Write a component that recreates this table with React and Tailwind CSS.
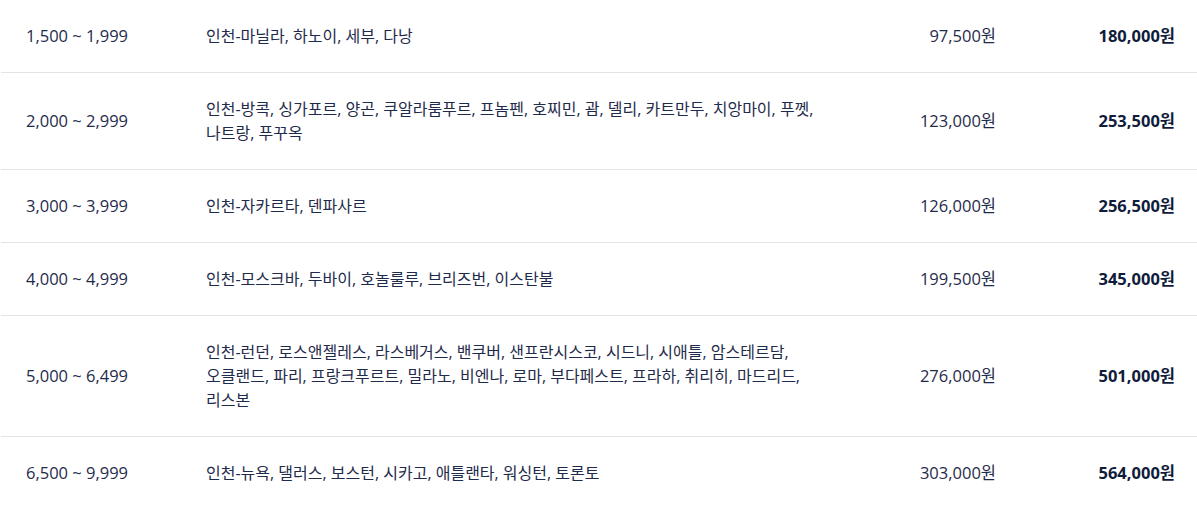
const rows = [
  {
    range: "1,500 ~ 1,999",
    cities: "인천-마닐라, 하노이, 세부, 다낭",
    base: "97,500원",
    total: "180,000원",
  },
  {
    range: "2,000 ~ 2,999",
    cities:
      "인천-방콕, 싱가포르, 양곤, 쿠알라룸푸르, 프놈펜, 호찌민, 괌, 델리, 카트만두, 치앙마이, 푸껫, 나트랑, 푸꾸옥",
    base: "123,000원",
    total: "253,500원",
  },
  {
    range: "3,000 ~ 3,999",
    cities: "인천-자카르타, 덴파사르",
    base: "126,000원",
    total: "256,500원",
  },
  {
    range: "4,000 ~ 4,999",
    cities: "인천-모스크바, 두바이, 호놀룰루, 브리즈번, 이스탄불",
    base: "199,500원",
    total: "345,000원",
  },
  {
    range: "5,000 ~ 6,499",
    cities:
      "인천-런던, 로스앤젤레스, 라스베거스, 밴쿠버, 샌프란시스코, 시드니, 시애틀, 암스테르담, 오클랜드, 파리, 프랑크푸르트, 밀라노, 비엔나, 로마, 부다페스트, 프라하, 취리히, 마드리드, 리스본",
    base: "276,000원",
    total: "501,000원",
  },
  {
    range: "6,500 ~ 9,999",
    cities: "인천-뉴욕, 댈러스, 보스턴, 시카고, 애틀랜타, 워싱턴, 토론토",
    base: "303,000원",
    total: "564,000원",
  },
];

export default function App() {
  return (
    <div
      className="w-full bg-white pl-px text-base leading-6 text-[#1f2b4b]"
      style={{ fontFamily: '"Open Sans", "Noto Sans CJK KR", sans-serif' }}
    >
      {rows.map((row, index) => (
        <div
          key={index}
          className={`grid grid-cols-[180px_670px_1fr_177px] items-center py-6 ${
            index < rows.length - 1 ? "border-b border-[#e4e4e4]" : ""
          }`}
        >
          <div className="pl-[25px] text-[16.5px]">{row.range}</div>
          <div className="break-keep pl-[25px] pr-[25px]">{row.cities}</div>
          <div className="pr-6 text-right text-[16.5px]">{row.base}</div>
          <div className="pr-[22px] text-right text-[16.5px] font-bold text-[#101c3b]">
            {row.total}
          </div>
        </div>
      ))}
    </div>
  );
}
